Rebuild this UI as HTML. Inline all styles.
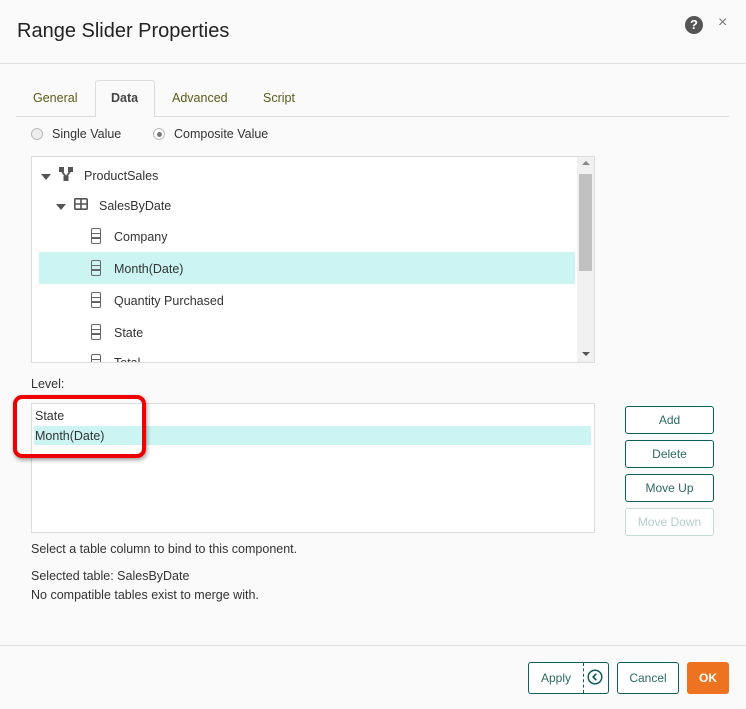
<!DOCTYPE html>
<html><head><meta charset="utf-8"><style>
*{box-sizing:border-box;margin:0;padding:0}
body{width:746px;height:709px;background:#fafafa;font-family:"Liberation Sans",sans-serif;font-size:12.5px;color:#333;position:relative;overflow:hidden}
.a{position:absolute;white-space:nowrap}
.btn{position:absolute;border:1px solid #0f5e57;border-radius:3px;color:#2d6a63;text-align:center;background:#fff;font-size:12px}
.ic{position:absolute;width:10px;height:16px;border:1.7px solid #666;border-radius:2px}
.ic:before,.ic:after{content:"";position:absolute;left:0;right:0;height:1.6px;background:#666}
.ic:before{top:3.5px}.ic:after{top:8px}
</style></head><body>
<div class="a" style="left:17px;top:20px;font-size:20px;color:#222">Range Slider Properties</div>
<div class="a" style="left:685px;top:16px;width:18px;height:18px;border-radius:50%;background:#555;color:#fff;font-weight:bold;font-size:13px;text-align:center;line-height:18px">?</div>
<div class="a" style="left:718px;top:14px;font-size:16px;color:#777">×</div>
<div class="a" style="left:0;top:63px;width:746px;height:1px;background:#e0e0e0"></div>

<div class="a" style="left:16px;top:116px;width:713px;height:1px;background:#ddd"></div>
<div class="a" style="left:95px;top:80px;width:60px;height:37px;border:1px solid #ddd;border-bottom:none;background:#fafafa;border-radius:3px 3px 0 0"></div>
<div class="a" style="left:33px;top:91px;color:#5b5b1a">General</div>
<div class="a" style="left:111px;top:91px;font-weight:bold;color:#444">Data</div>
<div class="a" style="left:172px;top:91px;color:#5b5b1a">Advanced</div>
<div class="a" style="left:263px;top:91px;color:#5b5b1a">Script</div>

<div class="a" style="left:31px;top:128px;width:12px;height:12px;border:1px solid #bbb;border-radius:50%;background:#eee"></div>
<div class="a" style="left:52px;top:127px">Single Value</div>
<div class="a" style="left:153px;top:128px;width:12px;height:12px;border:1px solid #bbb;border-radius:50%;background:#fff"><div style="margin:2.5px;width:5px;height:5px;border-radius:50%;background:#777"></div></div>
<div class="a" style="left:174px;top:127px">Composite Value</div>

<div class="a" style="left:31px;top:156px;width:564px;height:207px;border:1px solid #ddd;background:#fff;overflow:hidden">
 <div class="a" style="left:545px;top:0;width:18px;height:205px;background:#f1f1f1"></div>
 <div class="a" style="left:547px;top:17px;width:13px;height:97px;background:#c1c1c1"></div>
 <div class="a" style="left:550px;top:4px;border:4px solid transparent;border-bottom:4px solid #888;border-top:none"></div>
 <div class="a" style="left:550px;top:195px;border:4px solid transparent;border-top:4px solid #555;border-bottom:none"></div>
 <div class="a" style="left:7px;top:95px;width:536px;height:32px;background:#cbf4f3"></div>
 <div class="a" style="left:9px;top:17px;border:5px solid transparent;border-top:6px solid #555;border-bottom:none"></div>
 <svg class="a" style="left:27px;top:10px" width="14" height="14" viewBox="0 0 14 14"><rect x="0" y="0" width="5" height="5" fill="#555"/><rect x="9" y="0" width="5" height="5" fill="#555"/><rect x="4.5" y="9" width="5" height="5" fill="#555"/><path d="M2.5 4L7 10L11.5 4" stroke="#555" stroke-width="1.8" fill="none"/></svg>
 <div class="a" style="left:52px;top:12px">ProductSales</div>
 <div class="a" style="left:24px;top:47px;border:5px solid transparent;border-top:6px solid #555;border-bottom:none"></div>
 <svg class="a" style="left:42px;top:41px" width="14" height="12" viewBox="0 0 14 12"><rect x="0.8" y="0.8" width="12.4" height="10.4" rx="1" fill="none" stroke="#555" stroke-width="1.6"/><path d="M0.8 6H13.2M7 0.8V11.2" stroke="#555" stroke-width="1.6"/></svg>
 <div class="a" style="left:67px;top:42px">SalesByDate</div>
 <div class="ic" style="left:59px;top:71px"></div><div class="a" style="left:82px;top:73px">Company</div>
 <div class="ic" style="left:59px;top:103px"></div><div class="a" style="left:82px;top:105px">Month(Date)</div>
 <div class="ic" style="left:59px;top:135px"></div><div class="a" style="left:82px;top:137px">Quantity Purchased</div>
 <div class="ic" style="left:59px;top:167px"></div><div class="a" style="left:82px;top:169px">State</div>
 <div class="ic" style="left:59px;top:197px"></div><div class="a" style="left:82px;top:199px">Total</div>
</div>

<div class="a" style="left:31px;top:377px">Level:</div>
<div class="a" style="left:31px;top:403px;width:564px;height:130px;border:1px solid #ddd;background:#fff"></div>
<div class="a" style="left:34px;top:426px;width:557px;height:19px;background:#cbf4f3"></div>
<div class="a" style="left:35px;top:409px">State</div>
<div class="a" style="left:35px;top:429px">Month(Date)</div>
<div class="a" style="left:13px;top:395px;width:133px;height:63px;border:4px solid #e00;border-radius:9px;box-shadow:1px 2px 4px rgba(0,0,0,.4)"></div>

<div class="btn" style="left:625px;top:406px;width:89px;height:28px;line-height:26px">Add</div>
<div class="btn" style="left:625px;top:440px;width:89px;height:28px;line-height:26px">Delete</div>
<div class="btn" style="left:625px;top:474px;width:89px;height:28px;line-height:26px">Move Up</div>
<div class="btn" style="left:625px;top:508px;width:89px;height:28px;line-height:26px;border-color:#c5dcd9;color:#b5cfcc">Move Down</div>

<div class="a" style="left:31px;top:542px">Select a table column to bind to this component.</div>
<div class="a" style="left:31px;top:569px">Selected table: SalesByDate</div>
<div class="a" style="left:31px;top:588px">No compatible tables exist to merge with.</div>

<div class="a" style="left:0;top:645px;width:746px;height:1px;background:#e0e0e0"></div>
<div class="btn" style="left:528px;top:662px;width:81px;height:32px;line-height:30px;text-align:left;padding-left:12px">Apply</div>
<div class="a" style="left:583px;top:663px;height:30px;border-left:1px dashed #0f5e57"></div>
<svg class="a" style="left:587px;top:669px" width="16" height="16" viewBox="0 0 16 16"><circle cx="8" cy="8" r="6.8" fill="none" stroke="#0f5e57" stroke-width="1.5"/><path d="M9.3 4.8L6.2 8L9.3 11.2" fill="none" stroke="#0f5e57" stroke-width="1.7"/></svg>
<div class="btn" style="left:617px;top:662px;width:62px;height:32px;line-height:30px">Cancel</div>
<div class="a" style="left:687px;top:662px;width:42px;height:32px;line-height:32px;background:#ee7320;color:#fff;border-radius:3px;text-align:center;font-weight:bold;font-size:12px">OK</div>
</body></html>
